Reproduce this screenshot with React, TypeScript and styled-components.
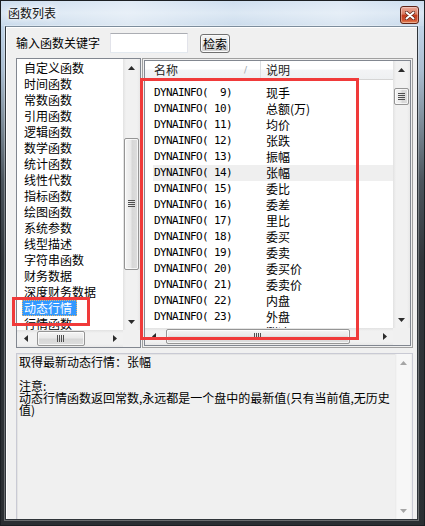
import React from 'react';
import styled, { createGlobalStyle } from 'styled-components';

const GlobalStyle = createGlobalStyle`
  html, body {
    margin: 0;
    padding: 0;
    background: #25292d;
  }
  body {
    font-family: "Noto Sans CJK SC", "Noto Sans", sans-serif;
    font-size: 12px;
    color: #000;
  }
  * {
    box-sizing: border-box;
  }
`;

const categories = [
  '自定义函数',
  '时间函数',
  '常数函数',
  '引用函数',
  '逻辑函数',
  '数学函数',
  '统计函数',
  '线性代数',
  '指标函数',
  '绘图函数',
  '系统参数',
  '线型描述',
  '字符串函数',
  '财务数据',
  '深度财务数据',
  '动态行情',
  '行情函数',
];

const functions: [number, string][] = [
  [9, '现手'],
  [10, '总额(万)'],
  [11, '均价'],
  [12, '张跌'],
  [13, '振幅'],
  [14, '张幅'],
  [15, '委比'],
  [16, '委差'],
  [17, '里比'],
  [18, '委买'],
  [19, '委卖'],
  [20, '委买价'],
  [21, '委卖价'],
  [22, '内盘'],
  [23, '外盘'],
  [24, '涨速'],
];

type Dir = 'up' | 'down' | 'left' | 'right';

const arrowPoints: Record<Dir, string> = {
  up: '0,4 3.5,0 7,4',
  down: '0,0 7,0 3.5,4',
  left: '4,0 4,7 0,3.5',
  right: '0,0 4,3.5 0,7',
};

const Arrow = ({ dir, color = '#2b2b2b' }: { dir: Dir; color?: string }) => {
  const flat = dir === 'up' || dir === 'down';
  return (
    <svg width={flat ? 7 : 4} height={flat ? 4 : 7} viewBox={flat ? '0 0 7 4' : '0 0 4 7'}>
      <polygon points={arrowPoints[dir]} fill={color} />
    </svg>
  );
};

const Grip = ({ vertical }: { vertical?: boolean }) => (
  <svg width={vertical ? 7 : 8} height={vertical ? 8 : 7} viewBox={vertical ? '0 0 7 8' : '0 0 8 7'}>
    {[0, 2, 4, 6].map((p) =>
      vertical ? (
        <rect key={p} x={0} y={p} width={7} height={1} fill="#4f4f4f" />
      ) : (
        <rect key={p} x={p} y={0} width={1} height={7} fill="#4f4f4f" />
      )
    )}
  </svg>
);

const VScroll = ({ offset, size, disabled }: { offset?: number; size?: number; disabled?: boolean }) => {
  const color = disabled ? '#a6a6a6' : '#2b2b2b';
  return (
    <VBar $disabled={disabled}>
      <ScrollButton>
        <Arrow dir="up" color={color} />
      </ScrollButton>
      <VTrack $offset={offset ?? 0}>
        {size ? (
          <VThumb $size={size}>
            <Grip vertical />
          </VThumb>
        ) : null}
      </VTrack>
      <ScrollButton>
        <Arrow dir="down" color={color} />
      </ScrollButton>
    </VBar>
  );
};

const HScroll = ({ offset, size }: { offset: number; size: number }) => (
  <HBar>
    <ScrollButton>
      <Arrow dir="left" />
    </ScrollButton>
    <HTrack $offset={offset}>
      <HThumb $size={size}>
        <Grip />
      </HThumb>
    </HTrack>
    <ScrollButton>
      <Arrow dir="right" />
    </ScrollButton>
  </HBar>
);

const pad = (n: number) => `DYNAINFO(${String(n).padStart(3, ' ')})`;

const App = () => {
  return (
    <>
      <GlobalStyle />
      <Window>
        <TitleBar>
          <Title>函数列表</Title>
          <CloseButton>
            <svg width="10" height="9" viewBox="0 0 10 9">
              <path d="M1.5 1.5 L8.5 7.5 M8.5 1.5 L1.5 7.5" stroke="#5a2216" strokeWidth="3.4" strokeLinecap="round" />
              <path d="M1.5 1.5 L8.5 7.5 M8.5 1.5 L1.5 7.5" stroke="#ffffff" strokeWidth="2" strokeLinecap="round" />
            </svg>
          </CloseButton>
        </TitleBar>

        <Content>
          <SearchRow>
            <Label>输入函数关键字</Label>
            <SearchInput />
            <SearchButton>检索</SearchButton>
          </SearchRow>

          <Panels>
            <CategoryBox>
              <BoxMain>
                <CategoryItems>
                  {categories.map((c) => (
                    <CategoryItem key={c}>
                      <ItemText $selected={c === '动态行情'}>{c}</ItemText>
                    </CategoryItem>
                  ))}
                </CategoryItems>
                <VScroll offset={62} size={132} />
              </BoxMain>
              <BoxBottom>
                <HScroll offset={3} size={48} />
                <Corner />
              </BoxBottom>
            </CategoryBox>

            <FuncBox>
              <FuncInner>
                <BoxMain>
                  <FuncBody>
                    <Header>
                      <HeaderCell $width={116} $pad={9} $divider>
                        名称
                        <SortMark>/</SortMark>
                      </HeaderCell>
                      <HeaderCell $pad={5}>说明</HeaderCell>
                    </Header>
                    <Rows>
                      {functions.map(([n, d]) => (
                        <Row key={n} $hot={n === 14}>
                          <NameCell>{pad(n)}</NameCell>
                          <span>{d}</span>
                        </Row>
                      ))}
                    </Rows>
                  </FuncBody>
                  <VScroll offset={10} size={17} />
                </BoxMain>
                <BoxBottom>
                  <HScroll offset={4} size={184} />
                  <Corner />
                </BoxBottom>
              </FuncInner>
            </FuncBox>
          </Panels>

          <DescPanel>
            <DescText>
              <div>取得最新动态行情：张幅</div>
              <div>&nbsp;</div>
              <div>注意:</div>
              <div>动态行情函数返回常数,永远都是一个盘中的最新值(只有当前值,无历史</div>
              <div>值)</div>
            </DescText>
            <VScroll disabled />
          </DescPanel>

          <CategoryMark />
          <FunctionMark />
        </Content>
      </Window>
    </>
  );
};

const Window = styled.div`
  width: 425px;
  height: 526px;
  border: 1px solid #1b1f23;
  display: flex;
  flex-direction: column;
  background: linear-gradient(
    180deg,
    #c6d9ed 0px,
    #d6e4f2 12px,
    #c0d4e8 26px,
    #aabdd0 70px,
    #7f8e9b 120px,
    #4b545c 180px,
    #30353a 260px,
    #2a2e32 100%
  );
`;

const TitleBar = styled.div`
  height: 25px;
  flex-shrink: 0;
  display: flex;
  align-items: flex-start;
  padding-left: 7px;
  background: linear-gradient(
    90deg,
    rgba(255, 255, 255, 0.1) 0%,
    rgba(255, 255, 255, 0.45) 30%,
    rgba(255, 255, 255, 0.15) 55%,
    rgba(255, 255, 255, 0.4) 80%,
    rgba(255, 255, 255, 0.1) 100%
  );
`;

const Title = styled.span`
  margin-top: 6px;
  line-height: 12px;
  color: #111;
  text-shadow: 0 0 4px #fff, 0 0 8px #fff;
`;

const CloseButton = styled.div`
  margin: 5px 5px 0 auto;
  width: 19px;
  height: 18px;
  border: 1px solid #5e2418;
  border-radius: 3px;
  display: flex;
  align-items: center;
  justify-content: center;
  background: linear-gradient(#eba797 0%, #d87b61 45%, #c23b1d 50%, #cf4e2c 80%, #e48a5c 100%);
  box-shadow: inset 0 0 0 1px rgba(255, 255, 255, 0.35);
`;

const Content = styled.div`
  position: relative;
  flex: 1;
  margin: 0 6px 5px 4px;
  border: 1px solid #2f3439;
  border-top-color: #7d8d9c;
  box-shadow: inset 1px 1px 0 #ffffff, 0 0 0 1px rgba(255, 255, 255, 0.3);
  background: #f0f0f0;
  padding: 6px 4px 0 10px;
  display: flex;
  flex-direction: column;
  gap: 5px;
`;

const SearchRow = styled.div`
  height: 20px;
  flex-shrink: 0;
  display: flex;
  align-items: center;
`;

const Label = styled.span`
  line-height: 12px;
  margin-right: 10px;
`;

const SearchInput = styled.input`
  width: 78px;
  height: 20px;
  margin-right: 12px;
  padding: 0 2px;
  border: 1px solid;
  border-color: #abadb3 #e2e3ea #e3e9ef #e2e3ea;
  background: #fff;
  font: inherit;
  outline: none;
`;

const SearchButton = styled.button`
  align-self: flex-end;
  width: 30px;
  height: 19px;
  padding: 0;
  border: 1px solid #707070;
  border-radius: 3px;
  background: linear-gradient(#f2f2f2 0%, #ebebeb 50%, #dddddd 51%, #cfcfcf 100%);
  box-shadow: inset 0 0 0 1px #fbfbfb;
  font: inherit;
  line-height: 15px;
  color: #000;
`;

const Panels = styled.div`
  height: 290px;
  flex-shrink: 0;
  display: flex;
  gap: 1px;
`;

const CategoryBox = styled.div`
  width: 125px;
  border: 1px solid #828790;
  background: #fff;
  display: flex;
  flex-direction: column;
`;

const BoxMain = styled.div`
  flex: 1;
  min-height: 0;
  display: flex;
`;

const BoxBottom = styled.div`
  height: 17px;
  flex-shrink: 0;
  display: flex;
`;

const CategoryItems = styled.div`
  flex: 1;
  overflow: hidden;
  padding: 1px 0 0 5px;
`;

const CategoryItem = styled.div`
  height: 16px;
  line-height: 16px;
  white-space: nowrap;
`;

const ItemText = styled.span<{ $selected?: boolean }>`
  display: inline-block;
  height: 16px;
  padding: 0 5px 0 2px;
  background: ${(p) => (p.$selected ? '#3399ff' : 'transparent')};
  color: ${(p) => (p.$selected ? '#fff' : '#000')};
  outline: ${(p) => (p.$selected ? '1px dotted #e7b46a' : 'none')};
  outline-offset: -1px;
`;

const FuncBox = styled.div`
  width: 271px;
  border: 1px solid #a0a0a0;
  padding: 1px;
  background: #f0f0f0;
  display: flex;
`;

const FuncInner = styled.div`
  flex: 1;
  border: 1px solid #828790;
  background: #fff;
  display: flex;
  flex-direction: column;
`;

const FuncBody = styled.div`
  flex: 1;
  overflow: hidden;
  display: flex;
  flex-direction: column;
`;

const Header = styled.div`
  height: 19px;
  flex-shrink: 0;
  display: flex;
  border-bottom: 1px solid #d5d5d5;
  background: linear-gradient(#ffffff 0%, #ffffff 45%, #f3f4f6 50%, #eef0f2 100%);
`;

const HeaderCell = styled.div<{ $width?: number; $pad: number; $divider?: boolean }>`
  ${(p) => (p.$width ? `width: ${p.$width}px;` : 'flex: 1;')}
  padding-left: ${(p) => p.$pad}px;
  border-right: ${(p) => (p.$divider ? '1px solid #dcdfe3' : 'none')};
  display: flex;
  align-items: center;
  line-height: 18px;
  color: #1e1e1e;
`;

const SortMark = styled.span`
  margin: 0 13px 0 auto;
  font-family: "DejaVu Sans", sans-serif;
  font-size: 9px;
  color: #9aa3ad;
`;

const Rows = styled.div`
  padding: 5px 0 0 8px;
`;

const Row = styled.div<{ $hot?: boolean }>`
  height: 16px;
  line-height: 16px;
  display: flex;
  white-space: pre;
  background: ${(p) => (p.$hot ? '#efefef' : 'transparent')};
`;

const NameCell = styled.span`
  width: 113px;
  padding-left: 1px;
  font-family: "DejaVu Sans Mono", monospace;
  font-size: 11px;
  letter-spacing: -0.62px;
`;

const DescPanel = styled.div`
  flex: 1;
  display: flex;
  border: 1px solid #c9cad4;
  border-bottom: none;
  box-shadow: inset 1px 1px 0 #e4e4e4;
`;

const DescText = styled.div`
  flex: 1;
  padding: 2px 0 0 2px;
  line-height: 12px;
  white-space: nowrap;
`;

const VBar = styled.div<{ $disabled?: boolean }>`
  width: 17px;
  flex-shrink: 0;
  display: flex;
  flex-direction: column;
  background: ${(p) =>
    p.$disabled
      ? 'linear-gradient(90deg, #e8e8e8 0, #f7f7f7 2px, #f7f7f7 15px, #ececec 17px)'
      : 'linear-gradient(90deg, #e2e2e2 0, #f1f1f1 3px, #f1f1f1 14px, #e8e8e8 17px)'};
`;

const HBar = styled.div`
  flex: 1;
  height: 17px;
  display: flex;
  background: linear-gradient(180deg, #e2e2e2 0, #f1f1f1 3px, #f1f1f1 14px, #e8e8e8 17px);
`;

const ScrollButton = styled.div`
  width: 17px;
  height: 17px;
  flex-shrink: 0;
  display: flex;
  align-items: center;
  justify-content: center;
`;

const VTrack = styled.div<{ $offset: number }>`
  flex: 1;
  padding-top: ${(p) => p.$offset}px;
`;

const HTrack = styled.div<{ $offset: number }>`
  flex: 1;
  display: flex;
  padding-left: ${(p) => p.$offset}px;
`;

const VThumb = styled.div<{ $size: number }>`
  height: ${(p) => p.$size}px;
  margin: 0 1px;
  border: 1px solid #959595;
  border-radius: 2px;
  display: flex;
  align-items: center;
  justify-content: center;
  background: linear-gradient(90deg, #f5f5f5 0%, #e9e9e9 45%, #d7d7d7 55%, #dedede 100%);
  box-shadow: inset 0 0 0 1px rgba(255, 255, 255, 0.7);
`;

const HThumb = styled.div<{ $size: number }>`
  width: ${(p) => p.$size}px;
  margin: 1px 0;
  border: 1px solid #959595;
  border-radius: 2px;
  display: flex;
  align-items: center;
  justify-content: center;
  background: linear-gradient(180deg, #f5f5f5 0%, #e9e9e9 45%, #d7d7d7 55%, #dedede 100%);
  box-shadow: inset 0 0 0 1px rgba(255, 255, 255, 0.7);
`;

const Corner = styled.div`
  width: 17px;
  height: 17px;
  flex-shrink: 0;
  background: #f0f0f0;
`;

const CategoryMark = styled.div`
  position: absolute;
  left: 6px;
  top: 270px;
  width: 78px;
  height: 29px;
  border: 3px solid #f03a3a;
  pointer-events: none;
`;

const FunctionMark = styled.div`
  position: absolute;
  left: 134px;
  top: 51px;
  width: 219px;
  height: 262px;
  border: 3px solid #f03a3a;
  pointer-events: none;
`;

export default App;
